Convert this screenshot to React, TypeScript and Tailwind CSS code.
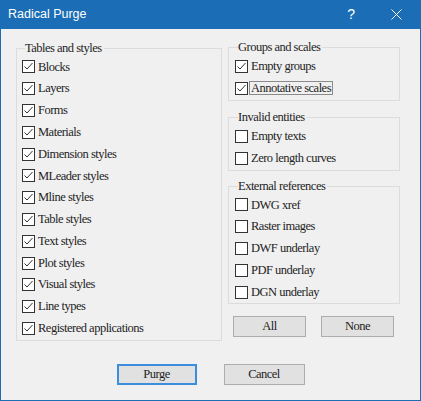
import React from 'react';

type Item = { label: string; checked: boolean; focus?: boolean };

const tables: Item[] = [
  'Blocks',
  'Layers',
  'Forms',
  'Materials',
  'Dimension styles',
  'MLeader styles',
  'Mline styles',
  'Table styles',
  'Text styles',
  'Plot styles',
  'Visual styles',
  'Line types',
  'Registered applications',
].map(label => ({ label, checked: true }));

const groups: Item[] = [
  { label: 'Empty groups', checked: true },
  { label: 'Annotative scales', checked: true, focus: true },
];

const invalid: Item[] = [
  { label: 'Empty texts', checked: false },
  { label: 'Zero length curves', checked: false },
];

const xrefs: Item[] = ['DWG xref', 'Raster images', 'DWF underlay', 'PDF underlay', 'DGN underlay'].map(label => ({
  label,
  checked: false,
}));

function CheckRow({ item, rowH }: { item: Item; rowH: string }) {
  return (
    <div className={`flex items-center ${rowH}`}>
      <span className="w-[13px] h-[13px] border border-[#333333] bg-white flex items-center justify-center shrink-0">
        {item.checked && (
          <svg width="11" height="11" viewBox="0 0 11 11">
            <polyline points="1.5,5.5 4,8 9.5,2" fill="none" stroke="#333333" strokeWidth="1" />
          </svg>
        )}
      </span>
      {item.focus ? (
        <span className="ml-[1px] px-[1px] border border-[#8a8a8a] leading-[12px]">{item.label}</span>
      ) : (
        <span className="ml-[3px]">{item.label}</span>
      )}
    </div>
  );
}

function Group({
  title,
  items,
  rowH,
  className,
}: {
  title: string;
  items: Item[];
  rowH: string;
  className: string;
}) {
  return (
    <fieldset className={`border border-[#dcdcdc] ${className}`}>
      <legend className="ml-[3px] leading-[14px] pr-[2px]">{title}</legend>
      <div className="mt-[1px]">
        {items.map(item => (
          <CheckRow key={item.label} item={item} rowH={rowH} />
        ))}
      </div>
    </fieldset>
  );
}

function Button({ label, primary }: { label: string; primary?: boolean }) {
  return (
    <button
      className={`h-[21px] bg-[#e1e1e1] flex items-center justify-center ${
        primary ? 'w-[80px] border-2 border-[#3c8ddb]' : 'w-[81px] border border-[#adadad]'
      }`}
    >
      {label}
    </button>
  );
}

export default function App() {
  return (
    <div className="w-[421px] h-[401px] flex flex-col bg-[#1b6db5] font-['Liberation_Serif',serif] text-[12.5px] tracking-[-0.5px] text-[#1e1e1e]">
      {/* Title bar */}
      <div className="h-[29px] flex items-center pl-[8px] text-white font-['Liberation_Sans',sans-serif] text-[12.5px] tracking-normal">
        <span>Radical Purge</span>
        <span className="ml-auto mr-[36px] text-[14px]">?</span>
        <svg width="11" height="11" viewBox="0 0 11 11" className="mr-[19px]">
          <path d="M0.5 0.5 L10.5 10.5 M10.5 0.5 L0.5 10.5" stroke="white" strokeWidth="1" />
        </svg>
      </div>

      {/* Body */}
      <div className="flex-1 mx-px mb-px bg-[#f0f0f0] flex flex-col">
        <div className="flex pl-[15px] pt-[12px] gap-[6px]">
          <Group title="Tables and styles" items={tables} rowH="h-[21.8px]" className="w-[206px] pl-[5px] pb-[1px]" />

          <div className="w-[172px] flex flex-col -mt-[1px]">
            <Group title="Groups and scales" items={groups} rowH="h-[22px]" className="pl-[6px] pb-[1px]" />
            <Group title="Invalid entities" items={invalid} rowH="h-[22px]" className="mt-[9px] pl-[6px] pb-[1px]" />
            <Group title="External references" items={xrefs} rowH="h-[21.8px]" className="mt-[8px] pl-[6px]" />
            <div className="flex gap-[15px] pl-[5px] mt-[12px]">
              <button className="w-[73px] h-[21px] bg-[#e1e1e1] border border-[#adadad]">All</button>
              <button className="w-[73px] h-[21px] bg-[#e1e1e1] border border-[#adadad]">None</button>
            </div>
          </div>
        </div>

        <div className="flex justify-center gap-[27px] mt-[23px]">
          <Button label="Purge" primary />
          <Button label="Cancel" />
        </div>
      </div>
    </div>
  );
}
